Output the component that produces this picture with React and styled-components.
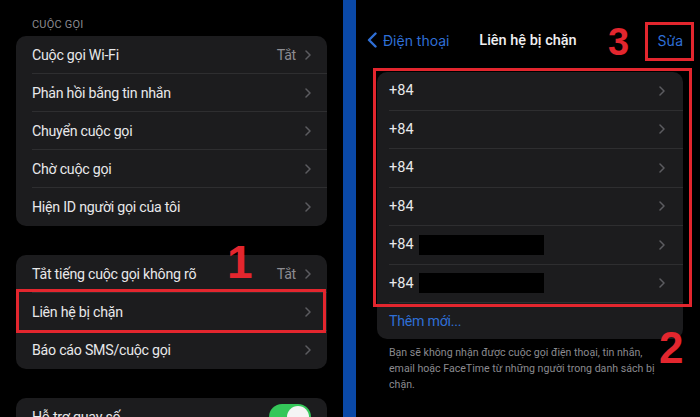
import React from "react";
import styled, { createGlobalStyle } from "styled-components";

const Global = createGlobalStyle`
  html, body { margin: 0; padding: 0; background: #000; }
  body {
    width: 700px; height: 417px; overflow: hidden;
    font-family: Roboto, "Noto Sans", sans-serif;
    -webkit-font-smoothing: antialiased;
  }
`;

const RED = "#e3262e";
const BLUE = "#2f6fd6";

const Page = styled.div`
  display: flex;
  width: 700px;
  height: 417px;
  overflow: hidden;
  background: #000;
`;

const LeftPane = styled.div`
  position: relative;
  width: 343px;
  flex: none;
  box-sizing: border-box;
  padding: 18px 16px 0;
  display: flex;
  flex-direction: column;
  gap: 29px;
`;

const Divider = styled.div`
  width: 13px;
  flex: none;
  background: #0a49a8;
`;

const RightPane = styled.div`
  position: relative;
  flex: 1;
  box-sizing: border-box;
  padding: 22px 17px 0 21px;
  display: flex;
  flex-direction: column;
`;

const Section = styled.section`
  display: flex;
  flex-direction: column;
`;

const SectionHeader = styled.div`
  font-size: 11px;
  line-height: 13px;
  letter-spacing: 0.2px;
  color: #8a8a8f;
  padding-left: 16px;
  margin-bottom: 5px;
`;

const Card = styled.div`
  background: #1c1c1e;
  border-radius: 10px;
  display: flex;
  flex-direction: column;
`;

const Row = styled.div`
  position: relative;
  height: ${(p) => p.$h || 38}px;
  padding-left: ${(p) => p.$pad || 16}px;
  display: flex;

  ${(p) =>
    p.$highlight &&
    `
    &::after {
      content: "";
      position: absolute;
      left: 0; right: 1px; top: -4px; bottom: -2px;
      border: 3px solid ${RED};
      pointer-events: none;
    }
  `}
`;

const RowInner = styled.div`
  flex: 1;
  display: flex;
  align-items: center;
  box-sizing: border-box;
  padding-right: ${(p) => p.$pad || 16}px;
  border-bottom: ${(p) => (p.$last ? "none" : "1px solid #2e2e30")};
`;

const Label = styled.span`
  flex: 1;
  font-size: 14.2px;
  letter-spacing: -0.25px;
  color: ${(p) => p.$color || "#e8e8ea"};
  white-space: nowrap;
`;

const Detail = styled.span`
  font-size: 14.2px;
  letter-spacing: -0.25px;
  color: #8c8c91;
  margin-right: 9px;
`;

const Chevron = () => (
  <svg width="6" height="10" viewBox="0 0 6 10" fill="none">
    <path d="M1 1l4 4-4 4" stroke="#5c5c60" strokeWidth="1.5" strokeLinecap="round" strokeLinejoin="round" />
  </svg>
);

const Toggle = styled.div`
  width: 42px;
  height: 26px;
  border-radius: 13px;
  background: #34c759;
  position: relative;
  &::after {
    content: "";
    position: absolute;
    right: 2px; top: 2px;
    width: 22px; height: 22px;
    border-radius: 50%;
    background: #f4f4f4;
  }
`;

const Nav = styled.div`
  display: grid;
  grid-template-columns: 1fr auto 1fr;
  align-items: center;
  height: 36px;
  margin-left: -10px;
  margin-bottom: 14px;
  font-family: Inter, Roboto, sans-serif;
`;

const Back = styled.div`
  display: flex;
  align-items: center;
  gap: 6px;
  color: ${BLUE};
  font-size: 14px;
`;

const NavTitle = styled.div`
  color: #f0f0f2;
  font-family: Roboto, sans-serif;
  font-size: 14.5px;
  font-weight: 500;
  transform: translateX(3px);
`;

const Edit = styled.div`
  justify-self: end;
  color: ${BLUE};
  font-size: 14px;
`;

const BlockedList = styled.div`
  position: relative;
  display: flex;
  flex-direction: column;
  &::after {
    content: "";
    position: absolute;
    left: -4px; right: -9px; top: -4px; bottom: -4px;
    border: 3px solid ${RED};
    pointer-events: none;
  }
`;

const Redacted = styled.span`
  width: 125px;
  height: 20px;
  background: #000;
  margin-left: 5px;
`;

const Number = styled.span`
  font-size: 14.5px;
  color: #e8e8ea;
`;

const NumberGroup = styled.div`
  flex: 1;
  display: flex;
  align-items: center;
`;

const Footer = styled.p`
  margin: 6px 0 0;
  padding: 0 16px 0 12px;
  font-size: 10.6px;
  line-height: 16px;
  color: #8a8a8f;
`;

const Step = styled.span`
  position: absolute;
  left: ${(p) => p.$x}px;
  top: ${(p) => p.$y}px;
  font-family: "Liberation Sans", Arial, sans-serif;
  font-weight: 700;
  font-size: ${(p) => p.$size}px;
  line-height: 1;
  color: ${RED};
`;

const Frame = styled.div`
  position: absolute;
  left: ${(p) => p.$x}px;
  top: ${(p) => p.$y}px;
  width: ${(p) => p.$w}px;
  height: ${(p) => p.$h}px;
  box-sizing: border-box;
  border: 3px solid ${RED};
`;

const group1 = [
  { label: "Cuộc gọi Wi-Fi", detail: "Tắt" },
  { label: "Phản hồi bằng tin nhắn" },
  { label: "Chuyển cuộc gọi" },
  { label: "Chờ cuộc gọi" },
  { label: "Hiện ID người gọi của tôi" },
];

const group2 = [
  { label: "Tắt tiếng cuộc gọi không rõ", detail: "Tắt" },
  { label: "Liên hệ bị chặn", highlight: true },
  { label: "Báo cáo SMS/cuộc gọi" },
];

const blocked = [false, false, false, false, true, true];

export default function App() {
  return (
    <>
      <Global />
      <Page>
        <LeftPane>
          <Section>
            <SectionHeader>CUỘC GỌI</SectionHeader>
            <Card>
              {group1.map((r, i) => (
                <Row key={r.label}>
                  <RowInner $last={i === group1.length - 1}>
                    <Label>{r.label}</Label>
                    {r.detail && <Detail>{r.detail}</Detail>}
                    <Chevron />
                  </RowInner>
                </Row>
              ))}
            </Card>
          </Section>
          <Section>
            <Card>
              {group2.map((r, i) => (
                <Row key={r.label} $highlight={r.highlight}>
                  <RowInner $last={i === group2.length - 1}>
                    <Label>{r.label}</Label>
                    {r.detail && <Detail>{r.detail}</Detail>}
                    <Chevron />
                  </RowInner>
                </Row>
              ))}
            </Card>
          </Section>
          <Section>
            <Card>
              <Row>
                <RowInner $last>
                  <Label>Hỗ trợ quay số</Label>
                  <Toggle />
                </RowInner>
              </Row>
            </Card>
          </Section>
          <Step $x={227} $y={239} $size={46}>1</Step>
        </LeftPane>
        <Divider />
        <RightPane>
          <Nav>
            <Back>
              <svg width="10" height="16" viewBox="0 0 10 16" fill="none">
                <path d="M8.5 1.5L2 8l6.5 6.5" stroke={BLUE} strokeWidth="2.4" strokeLinecap="round" strokeLinejoin="round" />
              </svg>
              Điện thoại
            </Back>
            <NavTitle>Liên hệ bị chặn</NavTitle>
            <Edit>Sửa</Edit>
          </Nav>
          <Card>
            <BlockedList>
              {blocked.map((hidden, i) => (
                <Row key={i} $h={38.5} $pad={12}>
                  <RowInner $pad={18}>
                    <NumberGroup>
                      <Number>+84</Number>
                      {hidden && <Redacted />}
                    </NumberGroup>
                    <Chevron />
                  </RowInner>
                </Row>
              ))}
            </BlockedList>
            <Row $h={36} $pad={12}>
              <RowInner $last>
                <Label $color={BLUE}>Thêm mới...</Label>
              </RowInner>
            </Row>
          </Card>
          <Footer>
            Bạn sẽ không nhận được cuộc gọi điện thoại, tin nhắn, email hoặc FaceTime từ những người trong danh sách bị chặn.
          </Footer>
          <Step $x={252} $y={23} $size={38}>3</Step>
          <Frame $x={289} $y={22} $w={49} $h={39} />
          <Step $x={303} $y={326} $size={44}>2</Step>
        </RightPane>
      </Page>
    </>
  );
}
